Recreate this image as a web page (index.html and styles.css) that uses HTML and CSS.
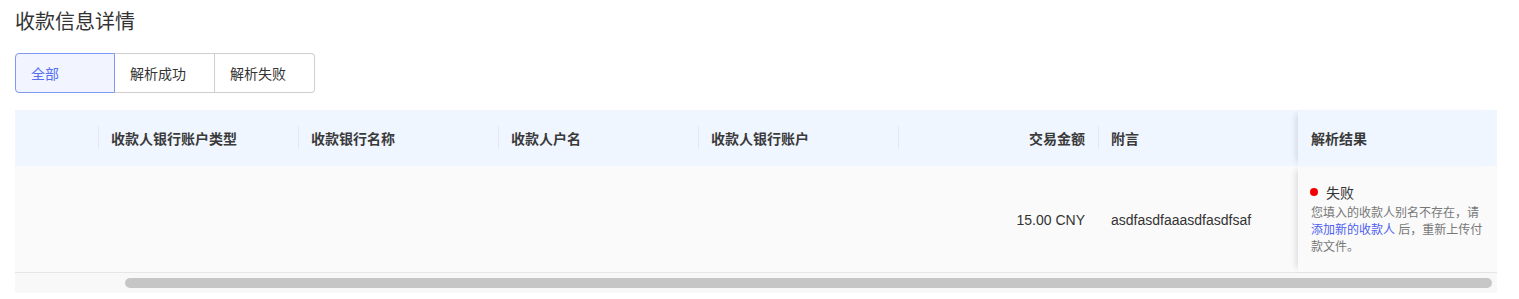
FILE: index.html
```html
<!DOCTYPE html>
<html lang="zh">
<head>
<meta charset="utf-8">
<link rel="stylesheet" href="styles.css">
</head>
<body>
<div class="page">
  <h1 class="title">收款信息详情</h1>
  <div class="tabs">
    <button class="tab active">全部</button>
    <button class="tab">解析成功</button>
    <button class="tab">解析失败</button>
  </div>
  <div class="table">
    <div class="grid head">
      <div class="th first"></div>
      <div class="th sep">收款人银行账户类型</div>
      <div class="th sep">收款银行名称</div>
      <div class="th sep">收款人户名</div>
      <div class="th sep">收款人银行账户</div>
      <div class="th sep right">交易金额</div>
      <div class="th sep">附言</div>
      <div class="th fixed">解析结果</div>
    </div>
    <div class="grid body">
      <div class="td first"></div>
      <div class="td"></div>
      <div class="td"></div>
      <div class="td"></div>
      <div class="td"></div>
      <div class="td mid right">15.00 CNY</div>
      <div class="td mid">asdfasdfaaasdfasdfsaf</div>
      <div class="td fixed result">
        <div class="status"><span class="dot"></span>失败</div>
        <div class="desc">您填入的收款人别名不存在，请<a class="link">添加新的收款人</a> 后，重新上传付款文件。</div>
      </div>
    </div>
    <div class="scroll">
      <div class="thumb"></div>
    </div>
  </div>
</div>
</body>
</html>
```

FILE: styles.css
```css
* { box-sizing: border-box; }
html, body { margin: 0; padding: 0; background: #fff; }
body {
  font-family: "PingFang SC", "Liberation Sans", "Noto Sans CJK SC", sans-serif;
  color: #333;
}
.page { padding: 0 22px 0 15px; }
.title {
  margin: 0;
  padding-top: 10px;
  height: 53px;
  font-size: 20px;
  line-height: 24px;
  font-weight: 400;
  color: #333;
}
.tabs { display: flex; height: 40px; }
.tab {
  width: 100px;
  height: 40px;
  padding: 0 0 0 15px;
  text-align: left;
  font: inherit;
  font-size: 14px;
  color: #333;
  background: #fff;
  border: 1px solid #cfcfcf;
  border-left-width: 0;
  cursor: pointer;
}
.tab:first-child { border-left-width: 1px; border-radius: 4px 0 0 4px; }
.tab:last-child { border-radius: 0 4px 4px 0; }
.tab.active {
  color: #5470f0;
  background: #f2f5ff;
  border: 1px solid #8096f5;
}
.table {
  margin-top: 17px;
  width: 1482px;
  box-shadow: inset 8px 0 8px -8px rgba(0,0,0,0.08);
}
.grid {
  display: grid;
  grid-template-columns: 83px repeat(6, 200px) 199px;
}
.head { height: 56px; background: #f0f6ff; }
.th {
  display: flex;
  align-items: center;
  padding: 0 13px;
  font-size: 14px;
  font-weight: 600;
  color: #3a3a3a;
  position: relative;
}
.th.sep::before {
  content: "";
  position: absolute;
  left: 0;
  top: 16px;
  height: 23px;
  width: 1px;
  background: #e4e9f1;
}
.th.right, .td.right { justify-content: flex-end; text-align: right; }
.fixed {
  background: inherit;
  box-shadow: -6px 0 6px -4px rgba(0,0,0,0.12);
}
.head .fixed { background: #f0f6ff; }
.body { height: 107px; background: #fafafa; border-bottom: 1px solid #e6e6e6; }
.body .fixed { background: #fafafa; }
.td { padding: 0 13px; font-size: 14px; color: #333; }
.td.mid { display: flex; align-items: center; padding-top: 2px; }
.result { padding-top: 16px; padding-right: 6px; }
.status {
  display: flex;
  align-items: center;
  height: 20px;
  font-size: 14px;
  color: #333;
}
.dot {
  width: 8px;
  height: 8px;
  border-radius: 50%;
  background: #f00000;
  margin-right: 8px;
  margin-left: -1px;
}
.desc {
  margin-top: 3px;
  font-size: 12px;
  line-height: 17px;
  color: #777;
}
.link { color: #4d5ff0; text-decoration: none; }
.scroll {
  height: 20px;
  background: #f8f8f8;
  padding: 5px 5px 0 110px;
}
.thumb {
  height: 10px;
  border-radius: 5px;
  background: #c6c6c6;
}
```
